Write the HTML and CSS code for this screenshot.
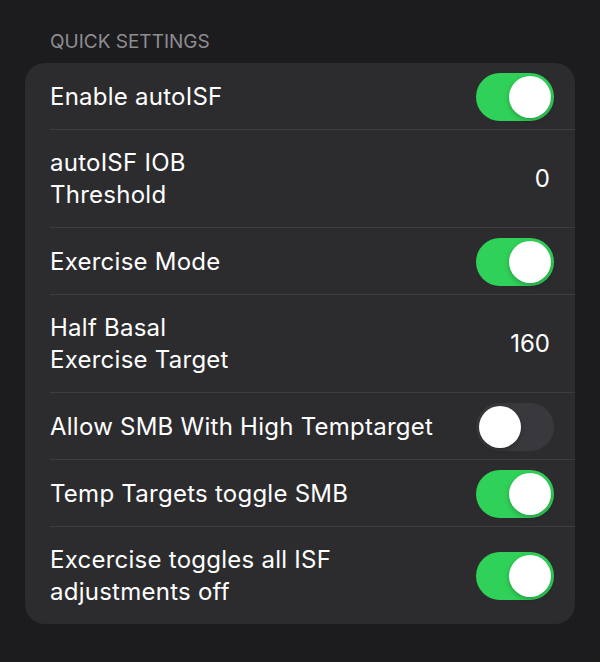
FILE: index.html
```html
<!DOCTYPE html>
<html>
<head>
<meta charset="utf-8">
<link rel="stylesheet" href="styles.css">
</head>
<body>
<div class="page">
  <div class="header">QUICK SETTINGS</div>
  <div class="card">
    <div class="row">
      <div class="label">Enable autoISF</div>
      <div class="toggle on"><span class="knob"></span></div>
    </div>
    <div class="row">
      <div class="label">autoISF IOB<br>Threshold</div>
      <div class="value">0</div>
    </div>
    <div class="row">
      <div class="label">Exercise Mode</div>
      <div class="toggle on"><span class="knob"></span></div>
    </div>
    <div class="row">
      <div class="label">Half Basal<br>Exercise Target</div>
      <div class="value">160</div>
    </div>
    <div class="row">
      <div class="label">Allow SMB With High Temptarget</div>
      <div class="toggle"><span class="knob"></span></div>
    </div>
    <div class="row">
      <div class="label">Temp Targets toggle SMB</div>
      <div class="toggle on"><span class="knob"></span></div>
    </div>
    <div class="row">
      <div class="label">Excercise toggles all ISF<br>adjustments off</div>
      <div class="toggle on"><span class="knob"></span></div>
    </div>
  </div>
</div>
</body>
</html>
```
FILE: styles.css
```css
html, body {
  margin: 0;
  padding: 0;
  background: #1c1c1e;
}
body {
  font-family: Inter, "Noto Sans", "Liberation Sans", sans-serif;
  color: #ffffff;
  width: 600px;
  height: 662px;
  overflow: hidden;
}
.page {
  padding: 30px 25px 0 25px;
}
.header {
  font-size: 19px;
  line-height: 23px;
  color: #8d8d92;
  padding-left: 25px;
  margin-bottom: 10px;
}
.card {
  background: #2c2c2e;
  border-radius: 20px;
  padding-left: 25px;
}
.row {
  display: flex;
  align-items: center;
  justify-content: space-between;
  padding: 17px 21px 16px 0;
  border-bottom: 1px solid #3d3d40;
  min-height: 33px;
}
.row:last-child {
  border-bottom: none;
}
.label {
  font-size: 24px;
  line-height: 32px;
  letter-spacing: 0.25px;
}
.value {
  font-size: 24px;
  line-height: 32px;
  padding-right: 4px;
}
.toggle {
  width: 78px;
  height: 48px;
  border-radius: 24px;
  background: #39393d;
  position: relative;
  margin: -8px 0;
}
.toggle.on {
  background: #30d158;
}
.knob {
  position: absolute;
  top: 3px;
  left: 3px;
  width: 42px;
  height: 42px;
  border-radius: 50%;
  background: #ffffff;
  box-shadow: 0 2px 5px rgba(0,0,0,0.25);
}
.toggle.on .knob {
  left: 33px;
}
```
